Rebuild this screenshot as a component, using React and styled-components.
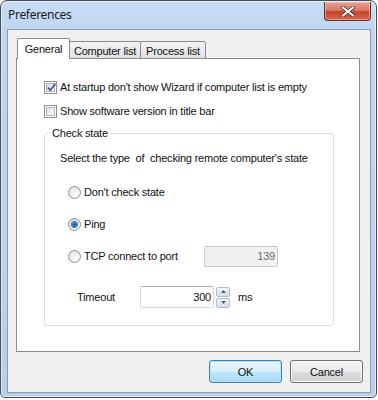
import styled, { createGlobalStyle } from 'styled-components';

const GlobalStyle = createGlobalStyle`
html, body {
  margin: 0;
  background: #ffffff;
}
body {
  font-family: "Liberation Sans", Arial, sans-serif;
  font-size: 11px;
  letter-spacing: -0.2px;
  color: #111;
}
`;

const Window = styled.div`
  box-sizing: border-box;
  width: 377px;
  height: 398px;
  border: 1px solid #474d55;
  border-radius: 7px 7px 5px 5px;
  background: linear-gradient(180deg, #c8ddf4 0px, #bfd6f0 30px, #b8d0ec 100%);
  box-shadow: inset 0 0 0 1px #e2edf9;
  padding: 0 5px 4px 6px;
  display: flex;
  flex-direction: column;
`;

const TitleBar = styled.div`
  height: 28px;
  display: flex;
  justify-content: space-between;
  align-items: flex-start;
`;

const Title = styled.div`
  font-family: "Noto Sans", "Open Sans", sans-serif;
  font-size: 12px;
  line-height: 16px;
  margin: 6px 0 0 1px;
  letter-spacing: -0.3px;
  color: #1a1a1a;
`;

const CloseButton = styled.div`
  box-sizing: border-box;
  width: 47px;
  height: 19px;
  margin-top: 1px;
  border: 1px solid #6e2f27;
  border-top: none;
  border-radius: 0 0 4px 4px;
  background: linear-gradient(180deg, #e8a494 0%, #d77a66 45%, #c4442d 55%, #d3684f 100%);
  box-shadow: inset 0 0 0 1px rgba(255, 210, 200, 0.5);
  display: flex;
  align-items: center;
  justify-content: center;
`;

const Client = styled.div`
  flex: 1;
  border: 1px solid #8d9cb0;
  background: #f0f0f0;
  padding: 8px 7px 9px 8px;
  display: flex;
  flex-direction: column;
`;

const TabStrip = styled.div`
  display: flex;
  align-items: flex-end;
  height: 21px;
  padding-left: 1px;
  margin-bottom: -1px;
  position: relative;
  z-index: 1;
`;

const Tab = styled.div`
  box-sizing: border-box;
  width: ${(p) => p.$w}px;
  height: ${(p) => (p.$active ? 21 : 18)}px;
  margin-left: ${(p) => (p.$first ? 0 : -1)}px;
  border: 1px solid #898c95;
  border-bottom: ${(p) => (p.$active ? 'none' : '1px solid #898c95')};
  border-radius: 2px 2px 0 0;
  background: ${(p) => (p.$active ? '#ffffff' : 'linear-gradient(180deg, #f3f3f3 0%, #ebebeb 50%, #e0e0e0 100%)')};
  position: relative;
  z-index: ${(p) => (p.$active ? 2 : 1)};
  display: flex;
  align-items: center;
  justify-content: center;
  padding-top: ${(p) => (p.$active ? 0 : 1)}px;
`;

const TabPanel = styled.div`
  box-sizing: border-box;
  width: 344px;
  height: 294px;
  border: 1px solid #898c95;
  background: #ffffff;
  padding: 20px 0 0 27px;
  display: flex;
  flex-direction: column;
`;

const CheckRow = styled.label`
  display: flex;
  align-items: center;
  gap: 3px;
  height: 16px;
  margin-top: ${(p) => p.$mt || 0}px;
`;

const CheckBox = styled.span`
  box-sizing: border-box;
  width: 13px;
  height: 13px;
  border: 1px solid #8e8f8f;
  background: #ffffff;
  padding: 1px;
  display: flex;
  span {
    flex: 1;
    border: 1px solid #aeb3b9;
    background: linear-gradient(135deg, #d9dde2 0%, #f3f4f6 70%, #ffffff 100%);
    position: relative;
  }
  svg {
    position: absolute;
    left: -2px;
    top: -3px;
  }
`;

const GroupBox = styled.fieldset`
  box-sizing: border-box;
  width: 290px;
  margin: 7px 0 0 0;
  padding: 0 0 17px 0;
  border: 1px solid #d5dfe5;
  border-radius: 3px;
  min-inline-size: auto;
`;

const GroupTitle = styled.legend`
  margin-left: 5px;
  padding: 0 2px;
  line-height: 14px;
  font-size: 11px;
`;

const GroupBody = styled.div`
  padding: 7px 0 0 15px;
  display: flex;
  flex-direction: column;
`;

const TextRow = styled.div`
  height: 22px;
  display: flex;
  align-items: center;
  margin-top: ${(p) => p.$mt || 0}px;
  padding-left: ${(p) => p.$indent || 0}px;
`;

const Radio = styled.span`
  box-sizing: border-box;
  width: 13px;
  height: 13px;
  border-radius: 50%;
  border: 1px solid #8e8f8f;
  background: radial-gradient(circle at 60% 70%, #ffffff 0%, #f1f1f1 40%, #d4d6d9 100%);
  display: flex;
  align-items: center;
  justify-content: center;
  margin-right: 3px;
  span {
    width: 5px;
    height: 5px;
    border-radius: 50%;
    background: radial-gradient(circle at 50% 60%, #1a4f9a 0%, #2f78c8 55%, #7db6e8 100%);
    box-shadow: 0 0 0 1px #3f6ea8;
  }
`;

const RadioLabel = styled.span`
  width: 120px;
`;

const FieldLabel = styled.span`
  width: 63px;
`;

const NumberBox = styled.div`
  box-sizing: border-box;
  width: 74px;
  height: ${(p) => (p.$disabled ? 21 : 22)}px;
  border: 1px solid ${(p) => (p.$disabled ? '#c9c9c9' : '#d7dbe1')};
  border-top-color: ${(p) => (p.$disabled ? '#c2c2c2' : '#abadb3')};
  border-radius: 2px;
  background: ${(p) => (p.$disabled ? '#f0f0f0' : '#ffffff')};
  color: ${(p) => (p.$disabled ? '#6d6d6d' : '#111')};
  display: flex;
  align-items: center;
  justify-content: flex-end;
  padding-right: 2px;
`;

const Spinner = styled.div`
  display: flex;
  flex-direction: column;
  gap: 1px;
  margin-left: 2px;
`;

const SpinButton = styled.div`
  box-sizing: border-box;
  width: 14px;
  height: 10px;
  border: 1px solid #b6bcc6;
  border-radius: 2px;
  background: linear-gradient(180deg, #f2f6fb 0%, #e1e8f1 50%, #d5dfea 100%);
  display: flex;
  align-items: center;
  justify-content: center;
`;

const Unit = styled.span`
  margin-left: 8px;
`;

const ButtonRow = styled.div`
  display: flex;
  justify-content: flex-end;
  gap: 8px;
  margin-top: 8px;
`;

const Button = styled.div`
  box-sizing: border-box;
  width: 73px;
  height: 23px;
  border: 1px solid ${(p) => (p.$default ? '#3c7fb1' : '#707070')};
  border-radius: 3px;
  background: ${(p) =>
    p.$default
      ? 'linear-gradient(180deg, #eaf6fd 0%, #d9f0fc 50%, #bee6fd 50%, #a7d9f5 100%)'
      : 'linear-gradient(180deg, #f2f2f2 0%, #ebebeb 50%, #dddddd 50%, #cfcfcf 100%)'};
  box-shadow: inset 0 0 0 1px ${(p) => (p.$default ? '#b6e2fb' : '#fcfcfc')};
  display: flex;
  align-items: center;
  justify-content: center;
`;

const Check = () => (
  <svg width="13" height="13" viewBox="0 0 13 13">
    <path d="M3 6.5 L5.3 9.3 L10.5 2.8" fill="none" stroke="#3d5a91" strokeWidth="1.8" strokeLinejoin="round" />
  </svg>
);

const Arrow = ({ down }) => (
  <svg width="5" height="3" viewBox="0 0 5 3">
    <path d={down ? 'M0 0 H5 L2.5 3 Z' : 'M0 3 H5 L2.5 0 Z'} fill="#3e5f97" />
  </svg>
);

const CloseGlyph = () => (
  <svg width="14" height="11" viewBox="0 0 14 11">
    <path d="M2 1.5 L12 9.5 M12 1.5 L2 9.5" stroke="#5a2a22" strokeWidth="3.6" strokeLinecap="square" />
    <path d="M2 1.5 L12 9.5 M12 1.5 L2 9.5" stroke="#ffffff" strokeWidth="2" strokeLinecap="square" />
  </svg>
);

const App = () => {
  return (
    <>
      <GlobalStyle />
      <Window>
        <TitleBar>
          <Title>Preferences</Title>
          <CloseButton>
            <CloseGlyph />
          </CloseButton>
        </TitleBar>
        <Client>
          <TabStrip>
            <Tab $w={53} $active $first>General</Tab>
            <Tab $w={72}>Computer list</Tab>
            <Tab $w={66}>Process list</Tab>
          </TabStrip>
          <TabPanel>
            <CheckRow>
              <CheckBox><span><Check /></span></CheckBox>
              At startup don't show Wizard if computer list is empty
            </CheckRow>
            <CheckRow $mt={8}>
              <CheckBox><span /></CheckBox>
              Show software version in title bar
            </CheckRow>
            <GroupBox>
              <GroupTitle>Check state</GroupTitle>
              <GroupBody>
                <TextRow>Select the type&nbsp; of&nbsp; checking remote computer's state</TextRow>
                <TextRow $mt={12} $indent={8}>
                  <Radio />
                  <RadioLabel>Don't check state</RadioLabel>
                </TextRow>
                <TextRow $mt={10} $indent={8}>
                  <Radio><span /></Radio>
                  <RadioLabel>Ping</RadioLabel>
                </TextRow>
                <TextRow $mt={10} $indent={8}>
                  <Radio />
                  <RadioLabel>TCP connect to port</RadioLabel>
                  <NumberBox $disabled>139</NumberBox>
                </TextRow>
                <TextRow $mt={19} $indent={17}>
                  <FieldLabel>Timeout</FieldLabel>
                  <NumberBox>300</NumberBox>
                  <Spinner>
                    <SpinButton><Arrow /></SpinButton>
                    <SpinButton><Arrow down /></SpinButton>
                  </Spinner>
                  <Unit>ms</Unit>
                </TextRow>
              </GroupBody>
            </GroupBox>
          </TabPanel>
          <ButtonRow>
            <Button $default>OK</Button>
            <Button>Cancel</Button>
          </ButtonRow>
        </Client>
      </Window>
    </>
  );
};

export default App;
